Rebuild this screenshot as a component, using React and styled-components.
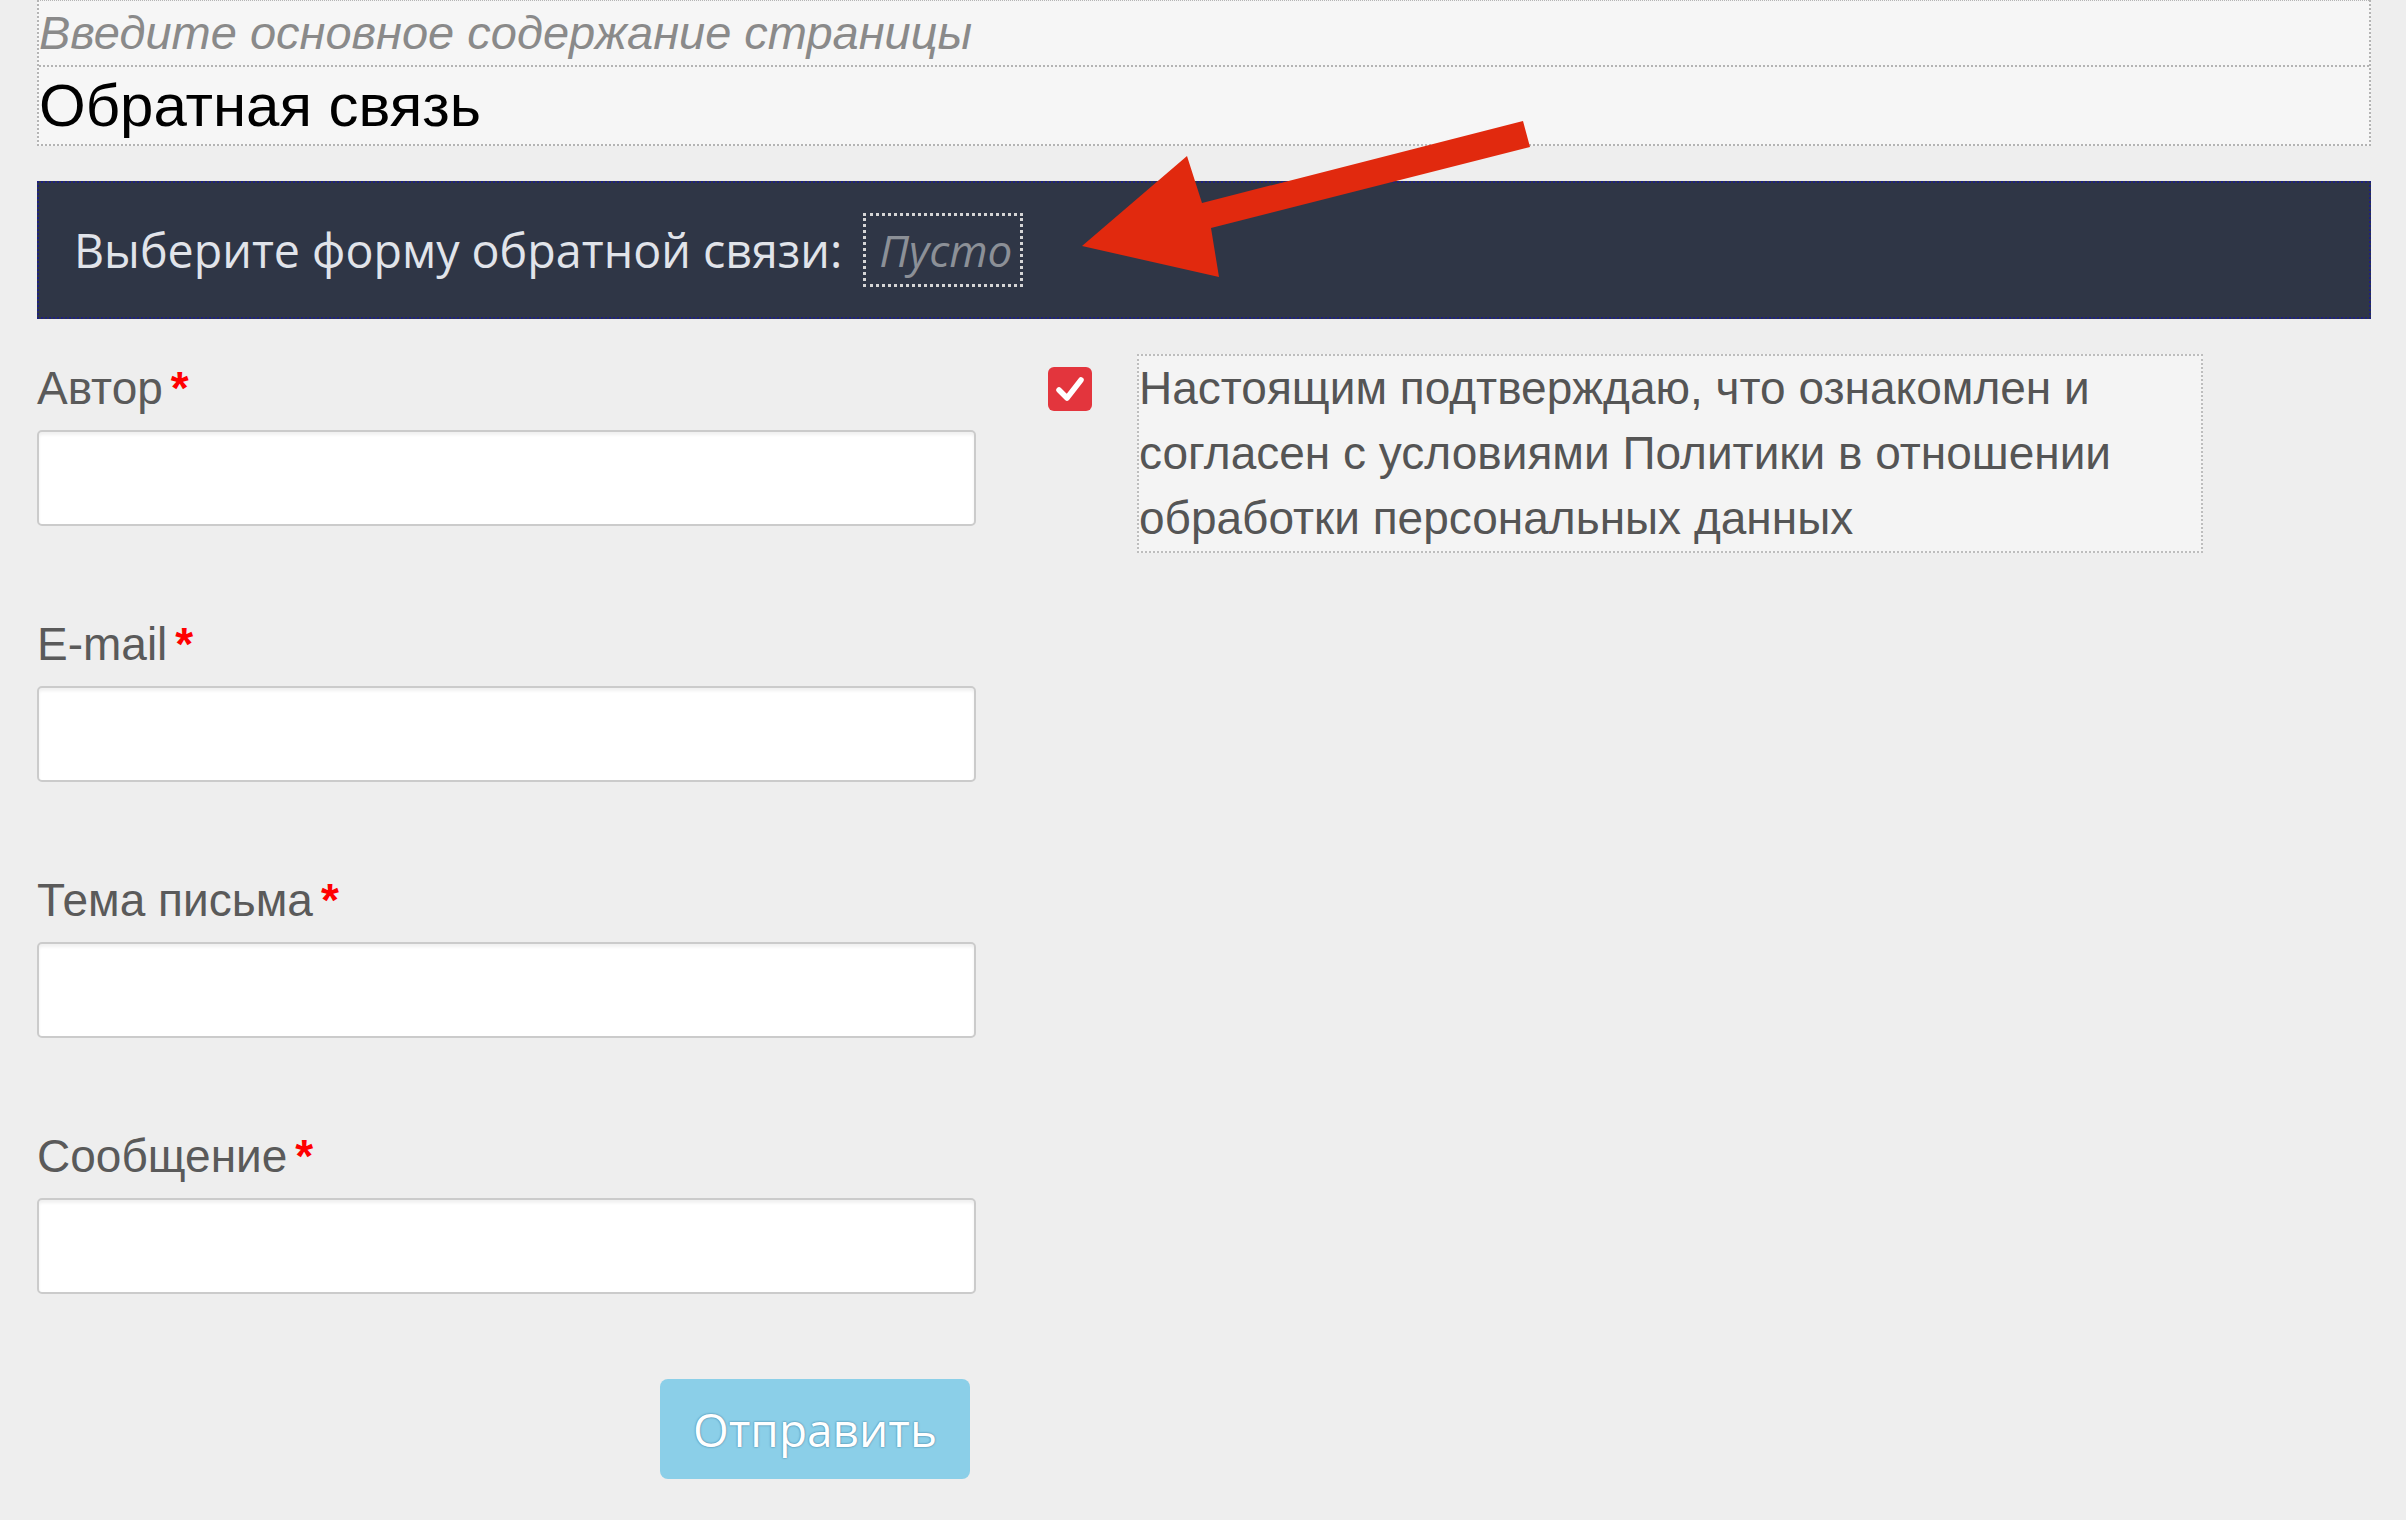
import styled, { createGlobalStyle } from 'styled-components'


const GlobalStyle = createGlobalStyle`
    html, body {
        margin: 0;
        padding: 0;
        background: #eeeeee;
        font-family: "Liberation Sans", Arial, sans-serif;
    }
`

const fields = ['Автор', 'E-mail', 'Тема письма', 'Сообщение']


const Page = styled.div`
    position: relative;
    padding: 0 35px 0 37px;
    min-height: 1520px;
    box-sizing: border-box;
`

const Editor = styled.div`
    border: 2px dotted #b4b4b4;
    border-top-width: 1px;
    background: #f6f6f6;
`

const Placeholder = styled.div`
    font-style: italic;
    font-size: 47px;
    line-height: 64px;
    color: #8a8a8a;
    border-bottom: 2px dotted #b4b4b4;
`

const Title = styled.h1`
    margin: 0;
    font-size: 60px;
    font-weight: 400;
    line-height: 77px;
    color: #000;
`

const FormBar = styled.div`
    margin-top: 35px;
    height: 138px;
    box-sizing: border-box;
    display: flex;
    align-items: center;
    gap: 21px;
    padding-left: 35px;
    background: #2f3646;
    border: 2px dotted #1d2080;
    font-family: "Open Sans", sans-serif;
    font-size: 46.6px;
    color: #e1e4ea;
`

const EmptySelect = styled.span`
    display: flex;
    align-items: center;
    height: 74px;
    box-sizing: border-box;
    padding: 0 8px 0 13px;
    border: 3px dotted #d6d6d6;
    font-size: 44px;
    font-style: italic;
    color: #8c9097;
`

const FormArea = styled.div`
    display: grid;
    grid-template-columns: 939px 1fr;
    column-gap: 72px;
    padding-top: 36px;
`

const Column = styled.div`
    display: flex;
    flex-direction: column;
`

const Field = styled.div`
    margin-bottom: 85px;
`

const Label = styled.label`
    display: block;
    height: 66px;
    margin-bottom: 9px;
    font-size: 46px;
    line-height: 66px;
    color: #5a5a5a;

    span {
        margin-left: 8px;
        color: #ff0000;
        font-weight: 700;
    }
`

const Input = styled.input`
    display: block;
    width: 100%;
    height: 96px;
    box-sizing: border-box;
    border: 2px solid #cbcbcb;
    border-radius: 5px;
    background: #fff;
    box-shadow: inset 0 3px 3px rgba(0, 0, 0, 0.06);
    outline: none;
`

const ButtonRow = styled.div`
    display: flex;
    justify-content: flex-end;
    padding-right: 6px;
`

const SubmitButton = styled.button`
    width: 310px;
    height: 100px;
    border: none;
    border-radius: 8px;
    background: #8bcfe8;
    color: #fff;
    font-family: "Open Sans", sans-serif;
    font-size: 46px;
    text-shadow: 0 0 2px rgba(20, 80, 120, 0.8);
`

const Consent = styled.div`
    display: flex;
    align-items: flex-start;
    gap: 45px;
`

const Check = styled.svg`
    flex: none;
    margin-top: 12px;
`

const PolicyText = styled.div`
    width: 1066px;
    box-sizing: border-box;
    margin-top: -1px;
    border: 2px dotted #bdbdbd;
    background: #f4f4f4;
    font-size: 46px;
    line-height: 65px;
    color: #555;
`

const Arrow = styled.svg`
    position: absolute;
    top: 0;
    left: 0;
    pointer-events: none;
`


export default function App() {
    return (
        <Page>
            <GlobalStyle />
            <Editor>
                <Placeholder>Введите основное содержание страницы</Placeholder>
                <Title>Обратная связь</Title>
            </Editor>

            <FormBar>
                Выберите форму обратной связи:
                <EmptySelect>Пусто</EmptySelect>
            </FormBar>

            <FormArea>
                <Column>
                    {fields.map(name => (
                        <Field key={name}>
                            <Label>{name}<span>*</span></Label>
                            <Input type='text' />
                        </Field>
                    ))}
                    <ButtonRow>
                        <SubmitButton>Отправить</SubmitButton>
                    </ButtonRow>
                </Column>

                <Consent>
                    <Check width='44' height='44' viewBox='0 0 44 44'>
                        <rect width='44' height='44' rx='6' fill='#e3353d' />
                        <path d='M11 23 L19 31 L33 13' fill='none' stroke='#fff' strokeWidth='5.5' strokeLinecap='round' strokeLinejoin='round' />
                    </Check>
                    <PolicyText>
                        Настоящим подтверждаю, что ознакомлен и согласен с условиями Политики в отношении обработки персональных данных
                    </PolicyText>
                </Consent>
            </FormArea>

            <Arrow width='2406' height='400' viewBox='0 0 2406 400'>
                <polygon
                    points='1082,246 1187,156 1202,203 1523,121 1530,147 1211,228 1219,277'
                    fill='#e1290e'
                />
            </Arrow>
        </Page>
    )
}
